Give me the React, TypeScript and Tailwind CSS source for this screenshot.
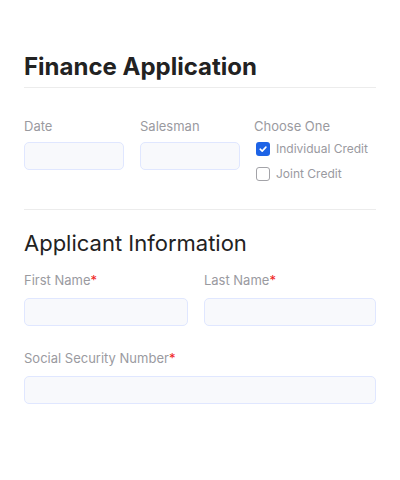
import React from "react";

function Input({ className = "" }: { className?: string }) {
  return (
    <div
      className={`h-7 rounded-[5px] border border-[#e0e7ff] bg-[#f8f9fc] ${className}`}
    />
  );
}

function Label({ children, req }: { children: React.ReactNode; req?: boolean }) {
  return (
    <div className="text-[13px] leading-5 text-[#9a9a9f]">
      {children}
      {req && <span className="text-[#ef2222]">*</span>}
    </div>
  );
}

export default function App() {
  return (
    <div
      className="min-h-[480px] w-[400px] bg-white px-6 pt-[51px]"
      style={{ fontFamily: "Inter, 'Noto Sans', sans-serif" }}
    >
      <h1 className="border-b border-[#ececec] pb-1 text-2xl font-bold leading-8 text-[#222]">
        Finance Application
      </h1>
      <div className="flex border-b border-[#ececec] pb-[28px] pt-[28px]">
        <div className="w-[100px]">
          <Label>Date</Label>
          <Input className="mt-1.5" />
        </div>
        <div className="ml-4 w-[100px]">
          <Label>Salesman</Label>
          <Input className="mt-1.5" />
        </div>
        <div className="ml-[14px]">
          <Label>Choose One</Label>
          <div className="mt-1.5 flex h-[14px] items-center pl-[2px]">
            <span className="flex h-[14px] w-[14px] items-center justify-center rounded-[3px] bg-[#1d63e6]">
              <svg width="10" height="10" viewBox="0 0 10 10" fill="none">
                <path
                  d="M2.2 5.2 L4.2 7.1 L7.9 3.1"
                  stroke="white"
                  strokeWidth="1.6"
                  strokeLinecap="round"
                  strokeLinejoin="round"
                />
              </svg>
            </span>
            <span className="ml-[6px] text-[12px] leading-[14px] text-[#9a9a9f]">
              Individual Credit
            </span>
          </div>
          <div className="mt-[11px] flex h-[14px] items-center pl-[2px]">
            <span className="h-[14px] w-[14px] rounded-[3px] border border-[#a3a3a8] bg-white" />
            <span className="ml-[6px] text-[12px] leading-[14px] text-[#9a9a9f]">
              Joint Credit
            </span>
          </div>
        </div>
      </div>
      <h2 className="mt-[19px] text-[22px] leading-7 text-[#222]">Applicant Information</h2>
      <div className="mt-[13px] flex gap-4">
        <div className="flex-1">
          <Label req>First Name</Label>
          <Input className="mt-2" />
        </div>
        <div className="flex-[1.05]">
          <Label req>Last Name</Label>
          <Input className="mt-2" />
        </div>
      </div>
      <div className="mt-[22px]">
        <Label req>Social Security Number</Label>
        <Input className="mt-2" />
      </div>
    </div>
  );
}
